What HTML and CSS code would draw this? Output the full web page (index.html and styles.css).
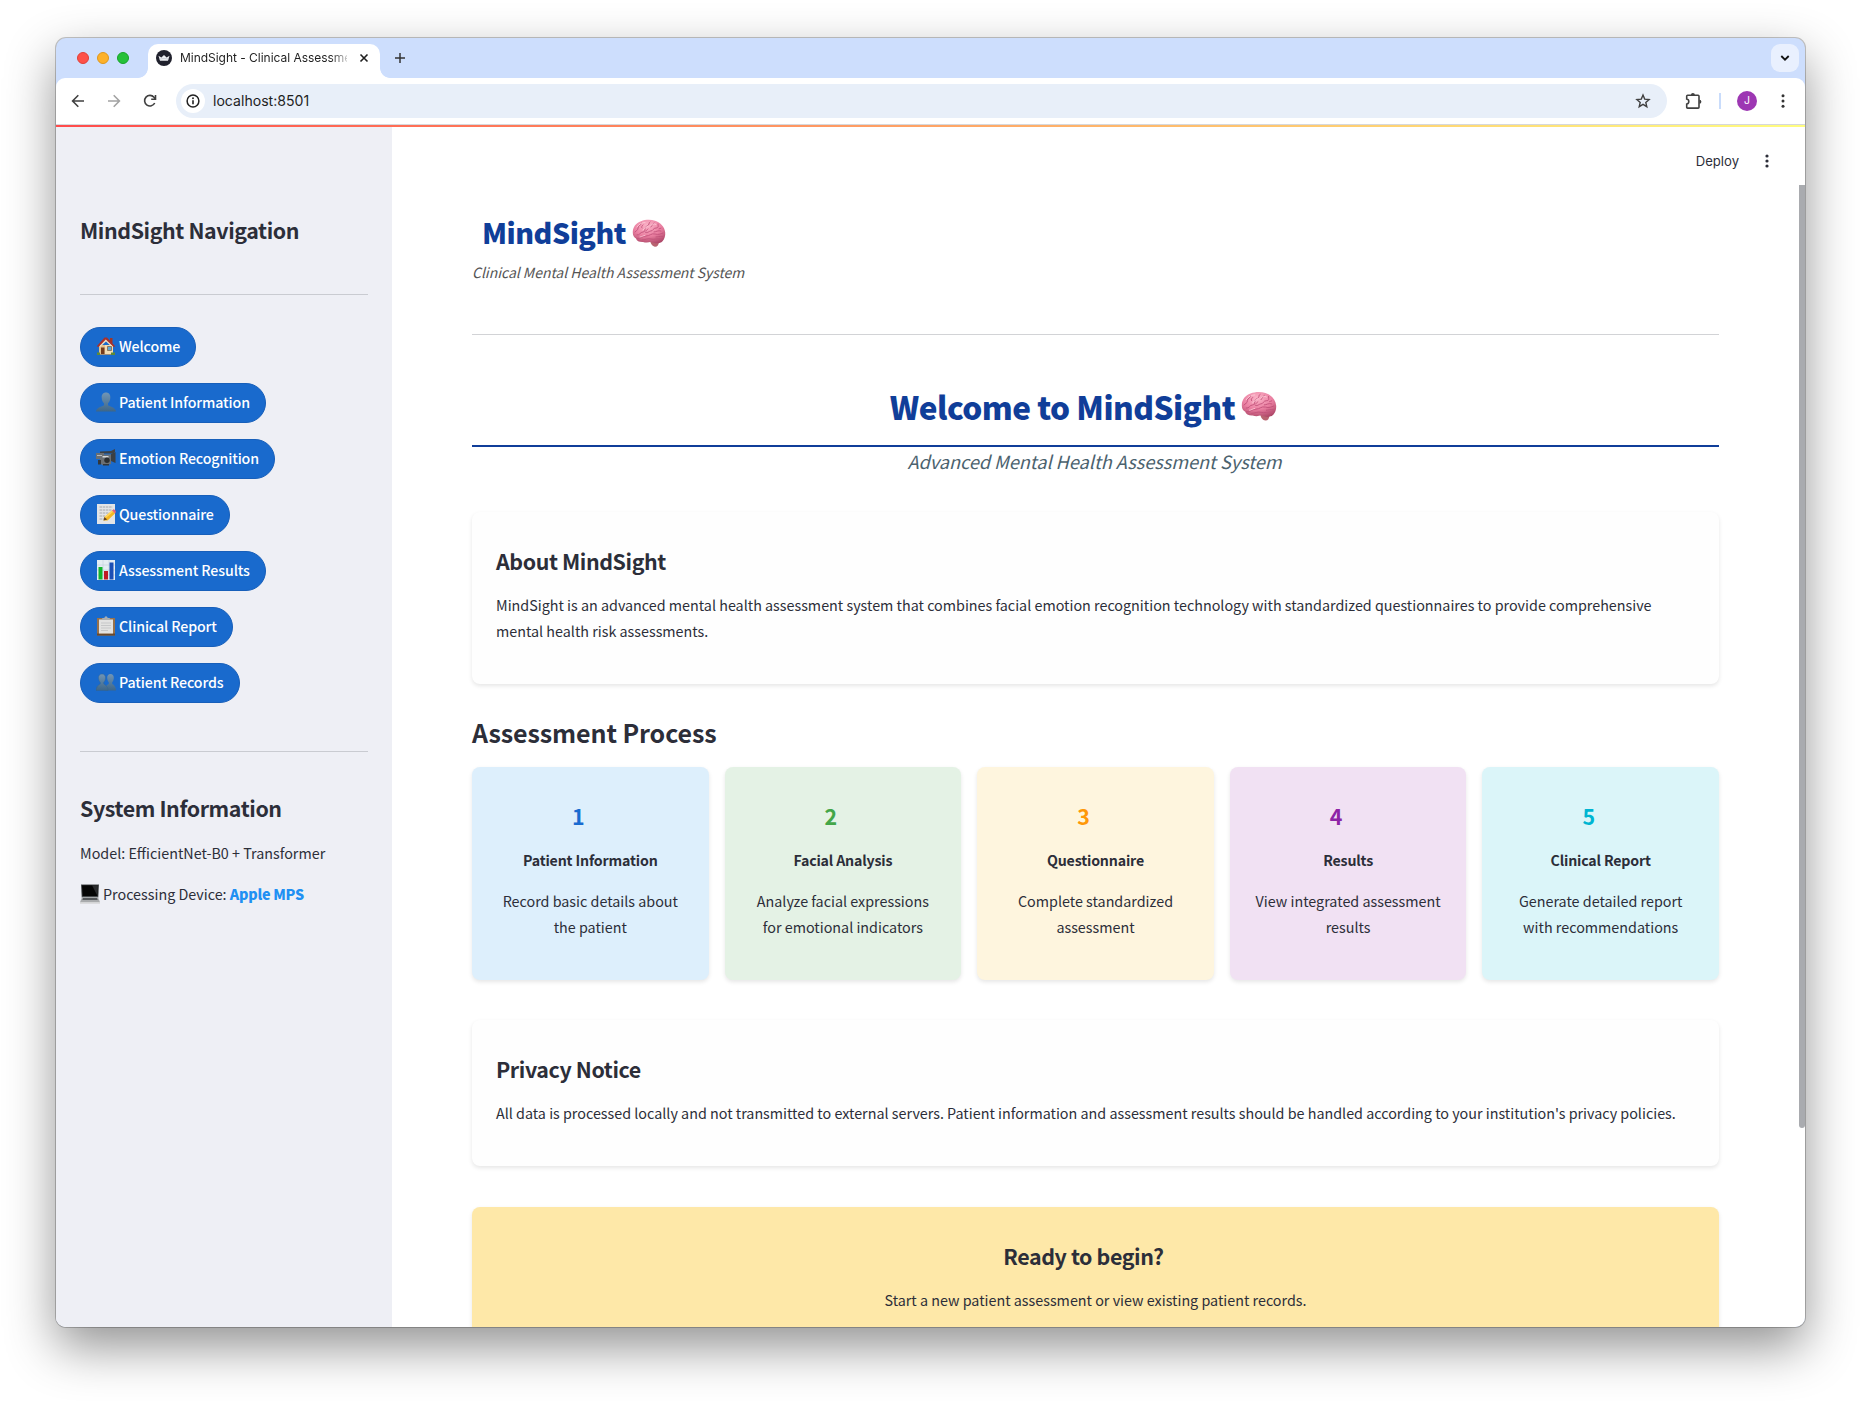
FILE: index.html
```html
<!DOCTYPE html>
<html lang="en">
<head>
<meta charset="utf-8">
<title>MindSight - Clinical Assessment</title>
<link rel="stylesheet" href="styles.css">
</head>
<body>
<svg class="defs" width="0" height="0" aria-hidden="true">
  <defs>
    <radialGradient id="pink" cx=".45" cy=".25" r=".8"><stop offset="0" stop-color="#fbb4c8"/><stop offset=".55" stop-color="#ea7fa1"/><stop offset="1" stop-color="#ad4767"/></radialGradient>
    <linearGradient id="bust" x1="0" y1="0" x2="0" y2="1"><stop offset="0" stop-color="#7195b5"/><stop offset="1" stop-color="#3d6688"/></linearGradient>
    <symbol id="brain" viewBox="0 0 34 28">
      <path d="M18 21.500c.5 3 2.500 6 5 6.200 2.500.1 3.500-1.700 4-4.700z" fill="#b86370"/>
      <path d="M.8 14C.5 8 4 4 9 2.200c4.500-1.800 10-1.900 14-.4 5.500 1.700 9.700 6.200 10.200 11.700.3 3.500-.7 6.500-2.700 8.700-1.800 2-5 2.500-8 1.800-1.300-.3-2.500-.8-3.500-1.200-2.500 1-5.500 1-8 .2-3.500.2-6.500-1-7-3.500C2 18.500.9 16.500.8 14z" fill="url(#pink)"/>
      <g fill="none" stroke="#c2527a" stroke-width=".9" stroke-linecap="round">
        <path d="M3 13c1-2 3-1 3-4s3-2 3.500-5M5 16c3 .5 3-3 6-3s1-5 4-6 1-3 3-4M10 9c-1-1 0-2 1-3M5 19.500c4 .5 5-2.500 9-2.500s5-3 9-2 5 0 8-1M13 13c2 2 4-1 6-1s2-3 5-3 2-2 2-4M19 8c1-1 1-3 3-4M22 13c2 0 4-2 7-1M10 21c3 0 6-2 9-1s6-1 11 0M24 18c2 0 3-1 7-.5M16 10c-1 1-2 1-2 2M29 9c-1 0-1 1-2 1"/>
      </g>
      <path d="M5 8c2-3 5-4.500 8-4.500M11 11c2-1 2-3 5-4M19 6.500c1-2 3-2 5-1M8 18c2 0 3-1.500 5-1.700" fill="none" stroke="#ffd6e0" stroke-width=".7" stroke-linecap="round"/>
    </symbol>
  </defs>
</svg>

<div class="window">
  <div class="tabstrip">
    <div class="lights"><i class="red"></i><i class="amber"></i><i class="green"></i></div>
    <div class="tab">
      <svg width="16" height="16" viewBox="0 0 16 16"><circle cx="8" cy="8" r="8" fill="#20212d"/><path d="M2.500 5.800l2.900 1.700L8 5l2.600 2.500 2.900-1.700-1.500 5H4z" fill="#eceef2"/><path d="M3.600 9.200c3-.9 5.800-.9 8.800 0" stroke="#b9bcc6" stroke-width=".6" fill="none"/></svg>
      <span class="tab-title">MindSight - Clinical Assessment</span>
      <svg width="10" height="10" viewBox="0 0 10 10"><path d="M1.500 1.500l7 7M8.500 1.500l-7 7" stroke="#1f1f1f" stroke-width="1.600"/></svg>
    </div>
    <svg class="new-tab" width="12" height="12" viewBox="0 0 12 12"><path d="M6 1v10M1 6h10" stroke="#333" stroke-width="1.500"/></svg>
    <div class="tab-search"><svg width="10" height="8" viewBox="0 0 10 8"><path d="M1.300 2L5 5.700 8.700 2" fill="none" stroke="#111" stroke-width="1.800"/></svg></div>
  </div>

  <div class="toolbar">
    <svg class="nav" width="14" height="14" viewBox="0 0 14 14"><path d="M13 7H2M7.300 1.300L1.600 7l5.700 5.700" fill="none" stroke="#404040" stroke-width="1.600"/></svg>
    <svg class="nav" width="14" height="14" viewBox="0 0 14 14"><path d="M1 7h11M6.700 1.300L12.400 7l-5.700 5.700" fill="none" stroke="#a3a3a3" stroke-width="1.600"/></svg>
    <svg class="nav" width="14" height="14" viewBox="0 0 14 14"><path d="M11.700 9A5.300 5.300 0 1 1 11 3.300l1.200 1.500" fill="none" stroke="#404040" stroke-width="1.600"/><path d="M12.500 1v4.300H8.200" fill="none" stroke="#404040" stroke-width="1.600"/></svg>
    <div class="address">
      <span class="info"><svg width="14" height="14" viewBox="0 0 14 14"><circle cx="7" cy="7" r="5.900" fill="none" stroke="#222" stroke-width="1.500"/><path d="M7 6.300v4" stroke="#222" stroke-width="1.600"/><circle cx="7" cy="4.200" r=".95" fill="#222"/></svg></span>
      <span class="url">localhost:8501</span>
      <svg width="16" height="16" viewBox="0 0 16 16"><path d="M8 2l1.700 4.100 4.400.4-3.300 2.900 1 4.300L8 11.400l-3.800 2.300 1-4.300L1.900 6.500l4.400-.4z" fill="none" stroke="#404040" stroke-width="1.400"/></svg>
    </div>
    <svg class="puzzle" width="17" height="17" viewBox="0 0 17 17"><path d="M1.700 6V3.200q0-.9.900-.9h10.500q.9 0 .9.900v11q0 .9-.9.900H2.600q-.9 0-.9-.9v-3.100a2.600 2.600 0 0 0 0-5.100z" fill="none" stroke="#404040" stroke-width="1.600"/><path d="M5.900 2a2 2 0 0 1 4 0zM14.400 6.800a2 2 0 0 1 0 4z" fill="#404040"/></svg>
    <i class="divider"></i>
    <span class="avatar">J</span>
    <svg class="dots" width="4" height="14" viewBox="0 0 4 14"><g fill="#333"><circle cx="2" cy="1.700" r="1.500"/><circle cx="2" cy="7" r="1.500"/><circle cx="2" cy="12.300" r="1.500"/></g></svg>
  </div>
  <div class="decoration"></div>

  <div class="app">
    <aside class="sidebar">
      <h2>MindSight Navigation</h2>
      <hr>
      <nav>
        <a><svg class="emoji" viewBox="0 0 20 20"><path d="M3 9h14v9H3z" fill="#f3dcb4"/><path d="M3 9h6v9H3z" fill="#e2c08e"/><path d="M14 2h2.500v5H14z" fill="#a33524"/><path d="M.8 10.200L8.500 1.500h2.500l8.200 8.700-1.400.8L10 4.500 2.200 11z" fill="#a8302a"/><path d="M9.800 3.600L4 9.500V11l6-5.500 6 5.500V9.500z" fill="#f5e2c0"/><path d="M5 11.500h3.500V18H5z" fill="#743a1c"/><path d="M11.500 10.500h4v4h-4z" fill="#5fa6d4" stroke="#856746" stroke-width=".8"/><path d="M1 16.500h3V19H1zM15 16.500h4V19h-4z" fill="#5f8b35"/><path d="M4 18h11v1H4z" fill="#9a8c7c"/></svg>Welcome</a>
        <a><svg class="emoji" viewBox="0 0 20 20"><path d="M10 .5c3 0 4.500 2.200 4.300 5.200-.1 2.300-.9 4.300-2.300 5.500v2c2 1.500 7.500 2 8 6.300H0c.5-4.300 6-4.800 8-6.300v-2C6.600 10 5.800 8 5.700 5.700 5.500 2.700 7 .5 10 .5z" fill="url(#bust)"/></svg>Patient Information</a>
        <a><svg class="emoji" viewBox="0 0 20 20"><path d="M4 3.500l11-.5 4-2v3l-2 1.500H4z" fill="#3c4044"/><path d="M0 5h8v6H0z" fill="#6a6f74"/><path d="M4 6.500h11v9.500l-9 1-2-3z" fill="#6b6f73"/><path d="M15 6l4.500-2v11L15 13z" fill="#3b3f43"/><path d="M6.500 8h6v1.500h-6z" fill="#d6d9db"/><circle cx="11" cy="12.300" r="2.700" fill="#2b2e31"/><path d="M1 7h5v1H1z" fill="#b6babd"/><path d="M2 12h3v4.500H2zM7 16h6v1.500H7z" fill="#34373a"/></svg>Emotion Recognition</a>
        <a><svg class="emoji" viewBox="0 0 20 20"><path d="M1 0h18v20H1z" fill="#e3e5e6"/><path d="M3.500 3h13M3.500 6h12M3.500 9h9M3.500 12h6M3.500 15h5" stroke="#a4a8ac" stroke-width="1" stroke-dasharray="2.500 .7"/><path d="M7.500 16.500l1-3.500L16 6.500l3 3-7.500 7z" fill="#f4b722"/><path d="M8.500 13l7.500-6.500 1.200 1.200-7.700 6.600z" fill="#ffd65a"/><path d="M16 6.500l1.500-1.200q2 .2 2.500 2.700l-1 1.500z" fill="#e2637a"/><path d="M7.500 16.500l1-3.500 2.700 2.500z" fill="#65451f"/></svg>Questionnaire</a>
        <a><svg class="emoji" viewBox="0 0 20 20"><path d="M1 0h18v20H1z" fill="#e4edf3"/><path d="M1 5h18M1 10h18M1 15h18M7 0v20M13 0v20" stroke="#b8c9d5" stroke-width=".5"/><path d="M2.500 7h4v12.500h-4z" fill="#12b52d"/><path d="M8 11h4v8.500H8z" fill="#c01c25"/><path d="M13.500 2.500h4v17h-4z" fill="#1b4fb4"/></svg>Assessment Results</a>
        <a><svg class="emoji" viewBox="0 0 20 20"><path d="M1 2h18v17.500H1z" fill="#97714b"/><path d="M1 17.500h18v2H1z" fill="#69492c"/><path d="M3 3.500h14v14H3z" fill="#e2e2e1"/><path d="M5 7h10M5 9.500h10M5 12h10M5 14.500h7" stroke="#c6c7c8" stroke-width="1"/><path d="M5.500 3.800q0-1.800 3-2 .1-1.600 1.500-1.600t1.500 1.600q3 .2 3 2z" fill="#a8adb3"/></svg>Clinical Report</a>
        <a><svg class="emoji" viewBox="0 0 20 20"><path d="M14.500 2c2.300 0 3.500 1.700 3.300 4-.1 1.800-.7 3.300-1.600 4.200v1.600c1.200 1.200 3.500 1.700 3.800 6.700H9c.3-5 2.600-5.500 3.800-6.700v-1.600C11.900 9.300 11.300 7.800 11.200 6c-.2-2.300 1-4 3.300-4z" fill="url(#bust)"/><path d="M6 2c2.300 0 3.700 1.700 3.500 4-.1 1.800-.7 3.300-1.800 4.200v1.600c1.400 1.200 4 2 4.300 6.700H0c.3-4.700 2.900-5.500 4.300-6.700v-1.600C3.200 9.300 2.600 7.800 2.500 6 2.300 3.700 3.700 2 6 2z" fill="url(#bust)" stroke="#31628f" stroke-width=".4"/></svg>Patient Records</a>
      </nav>
      <hr class="second">
      <h2 class="system">System Information</h2>
      <p class="model">Model: EfficientNet-B0 + Transformer</p>
      <p class="device"><svg class="emoji" viewBox="0 0 20 20"><path d="M1 .5h18l-.7 13H1.700z" fill="#45484b"/><path d="M2 1.300h16L17.500 12h-15z" fill="#050505"/><path d="M12 1.300h6L17.500 12z" fill="#2b2c2e"/><path d="M2 13.300h16l2 5H0z" fill="#a9abad"/><path d="M3 14h14l.7 2H2.300z" fill="#55585b"/><path d="M0 18h20v1.700H0z" fill="#d4d5d6"/></svg>Processing Device: <strong>Apple MPS</strong></p>
    </aside>

    <main class="main">
      <div class="menu">
        <span>Deploy</span>
        <svg width="4" height="14" viewBox="0 0 4 14"><g fill="#2c2e39"><circle cx="2" cy="2" r="1.600"/><circle cx="2" cy="7" r="1.600"/><circle cx="2" cy="12" r="1.600"/></g></svg>
      </div>
      <div class="content">
        <h1 class="brand">MindSight<svg width="34" height="28"><use href="#brain"/></svg></h1>
        <p class="tagline">Clinical Mental Health Assessment System</p>
        <hr>
        <h1 class="welcome">Welcome to MindSight<svg width="36" height="30"><use href="#brain"/></svg></h1>
        <p class="subtitle">Advanced Mental Health Assessment System</p>

        <section class="card">
          <h3>About MindSight</h3>
          <p>MindSight is an advanced mental health assessment system that combines facial emotion recognition technology with standardized questionnaires to provide comprehensive mental health risk assessments.</p>
        </section>

        <h2 class="process">Assessment Process</h2>
        <div class="steps">
          <section class="step blue"><h3>1</h3><h4>Patient Information</h4><p>Record basic details about the patient</p></section>
          <section class="step green"><h3>2</h3><h4>Facial Analysis</h4><p>Analyze facial expressions for emotional indicators</p></section>
          <section class="step yellow"><h3>3</h3><h4>Questionnaire</h4><p>Complete standardized assessment</p></section>
          <section class="step purple"><h3>4</h3><h4>Results</h4><p>View integrated assessment results</p></section>
          <section class="step cyan"><h3>5</h3><h4>Clinical Report</h4><p>Generate detailed report with recommendations</p></section>
        </div>

        <section class="card privacy">
          <h3>Privacy Notice</h3>
          <p>All data is processed locally and not transmitted to external servers. Patient information and assessment results should be handled according to your institution's privacy policies.</p>
        </section>

        <section class="card ready">
          <h3>Ready to begin?</h3>
          <p>Start a new patient assessment or view existing patient records.</p>
        </section>
      </div>
      <i class="scrollbar"></i>
    </main>
  </div>
</div>
</body>
</html>
```
FILE: styles.css
```css
* { box-sizing: border-box; }

body {
  margin: 0;
  height: 1401px;
  padding: 38px 56px 74px;
  overflow: hidden;
  background: #fff;
  color: #2c2e39;
  font: 14.33px/26px "Noto Sans CJK SC", "Noto Sans", sans-serif;
}

h1, h2, h3, h4, p { margin: 0; }
svg { display: block; flex: none; }
.defs { position: absolute; }

.window {
  width: 1749px;
  height: 1289px;
  display: flex;
  flex-direction: column;
  overflow: hidden;
  border-radius: 10px;
  background: #cddefd;
  box-shadow: 0 0 0 1px rgba(0, 0, 0, .22), 0 20px 50px rgba(0, 0, 0, .43);
}

/* Browser chrome */
.tabstrip {
  height: 40px;
  flex: none;
  display: flex;
  padding: 6px 6px 0 21px;
  font-family: Inter, sans-serif;
}
.lights { display: flex; gap: 8px; padding-top: 8px; width: 71px; }
.lights i { width: 12px; height: 12px; border-radius: 50%; border: 1px solid; }
.lights .red { background: #fe5149; border-color: #e03f38; }
.lights .amber { background: #fdb12a; border-color: #de971c; }
.lights .green { background: #25c139; border-color: #17a329; }
.tab {
  position: relative;
  width: 232px;
  height: 34px;
  display: flex;
  align-items: center;
  padding: 0 11px 6px 8px;
  border-radius: 10px 10px 0 0;
  background: #fff;
}
.tab::before, .tab::after {
  content: "";
  position: absolute;
  bottom: 0;
  width: 10px;
  height: 10px;
}
.tab::before { left: -10px; background: radial-gradient(circle at 0 0, transparent 9.5px, #fff 10.2px); }
.tab::after { right: -10px; background: radial-gradient(circle at 100% 0, transparent 9.5px, #fff 10.2px); }
.tab-title {
  width: 167px;
  margin: 0 12px 0 8px;
  overflow: hidden;
  white-space: nowrap;
  font-size: 12px;
  letter-spacing: -.03px;
  line-height: 20px;
  color: #1f1f1f;
  -webkit-mask-image: linear-gradient(90deg, #000 150px, transparent 172px);
  mask-image: linear-gradient(90deg, #000 150px, transparent 172px);
}
.new-tab { margin: 8px 0 0 14px; }
.tab-search {
  width: 28px;
  height: 28px;
  margin-left: auto;
  display: grid;
  place-items: center;
  border-radius: 9px;
  background: #e9f0fe;
}
.toolbar {
  height: 47px;
  flex: none;
  display: flex;
  align-items: center;
  padding: 0 20px 0 15px;
  border-bottom: 1px solid #d6d8dc;
  border-radius: 9px 9px 0 0;
  background: #fff;
}
.nav { margin-right: 22px; }
.nav:nth-of-type(3) { margin-right: 19px; }
.address {
  width: 1491px;
  height: 34px;
  display: flex;
  align-items: center;
  padding: 0 16px 0 5px;
  border-radius: 17px;
  background: #e8eff9;
}
.info { width: 24px; height: 24px; display: grid; place-items: center; border-radius: 50%; background: #fff; }
.url { flex: 1; margin-left: 8px; font: 14.1px/20px Inter, sans-serif; color: #1f1f1f; }
.puzzle { margin-left: 18px; }
.divider { width: 2px; height: 16px; margin: 0 16px 0 17px; background: #c9dcfb; }
.avatar {
  width: 20px;
  height: 20px;
  border-radius: 50%;
  background: #9d37b3;
  color: #fff;
  font: 10.5px/20px Inter, sans-serif;
  text-align: center;
}
.dots { margin-left: 24px; }
.decoration { height: 2px; flex: none; background: linear-gradient(90deg, #ff4b4b, #fffd80); }

/* App */
.app { flex: 1; min-height: 0; display: flex; background: #fff; }
hr { height: 1px; margin: 0; border: 0; background: #d2d3d6; }
h2, h3 { font-size: 21.4px; line-height: 28px; font-weight: 700; letter-spacing: -.4px; }
.emoji { width: 20px; height: 20px; }

.sidebar { width: 336px; flex: none; padding: 89px 24px 0; background: #eeeff5; }
.sidebar hr { margin-top: 50px; background: #c9cbd1; }
.sidebar nav { display: flex; flex-direction: column; align-items: flex-start; gap: 16px; margin-top: 32px; }
.sidebar a {
  height: 40px;
  display: flex;
  align-items: center;
  gap: 3px;
  padding: 0 15px 3px;
  border: 1px solid #175fba;
  border-radius: 20px;
  background: #196acd;
  color: #fff;
  font-size: 14.2px;
  font-weight: 500;
  letter-spacing: -.11px;
  white-space: nowrap;
}
.sidebar hr.second { margin-top: 48px; }
.system { margin-top: 42px; }
.model { margin-top: 18px; }
.device { display: flex; align-items: center; margin-top: 15px; white-space: pre; }
.device .emoji { margin: -1px 3px 0 0; }
.device strong { color: #2090f3; font-weight: 900; letter-spacing: -.25px; }

.main { position: relative; flex: 1; min-width: 0; overflow: hidden; }
.menu {
  height: 58px;
  display: flex;
  justify-content: flex-end;
  align-items: center;
  gap: 26px;
  padding: 10px 36px 0 0;
  font: 13.1px/20px Inter, sans-serif;
}
.content { padding: 28px 86px 0 80px; }
.brand { display: flex; align-items: center; gap: 6px; padding-left: 10px; font-size: 28.6px; line-height: 38px; font-weight: 900; letter-spacing: -.5px; color: #103e99; }
.brand svg { margin-top: 1px; }
.tagline { margin-top: 8px; font-size: 14px; font-style: italic; letter-spacing: -.03px; color: #555; }
.content hr { margin-top: 49px; }
.welcome {
  height: 62px;
  margin-top: 50px;
  display: flex;
  justify-content: center;
  padding-right: 24px;
  gap: 6px;
  border-bottom: 2px solid #103e99;
  font-size: 31.5px;
  line-height: 42px;
  font-weight: 900;
  letter-spacing: -.52px;
  color: #103e99;
}
.welcome svg { margin-top: 6px; }
.subtitle { padding: 0 2px 1px 0; font-size: 18.2px; line-height: 29px; font-style: italic; letter-spacing: -.04px; text-align: center; color: #4b626e; }
.card {
  margin-top: 35px;
  padding: 35px 24px 40px;
  border-radius: 8px;
  background: #fefefe;
  box-shadow: 0 2px 4px rgba(0, 0, 0, .1);
}
.card p { margin-top: 17px; }
.process { margin-top: 31px; font-size: 25px; line-height: 34px; letter-spacing: -.08px; }
.steps { display: grid; grid-template-columns: repeat(5, 1fr); gap: 16px; margin-top: 18px; }
.step { height: 213px; padding: 35px 24px 0; border-radius: 8px; text-align: center; box-shadow: 0 2px 4px rgba(0, 0, 0, .1); }
.step h3 { padding-right: 24px; letter-spacing: 0; }
.step h4 { margin-top: 17px; font-size: 14.2px; line-height: 26px; letter-spacing: -.17px; }
.step p { margin-top: 15px; }
.step.blue { background: #ddeffc; }
.blue h3 { color: #196bd0; }
.step.green { background: #e4f2e5; }
.green h3 { color: #43a648; }
.step.yellow { background: #fef5de; }
.yellow h3 { color: #ff9807; }
.step.purple { background: #f1e1f3; }
.purple h3 { color: #8e24a6; }
.step.cyan { background: #dbf5f9; }
.cyan h3 { color: #00b5d2; }
.privacy { margin-top: 40px; }
.ready { height: 180px; margin-top: 41px; background: #fee8a8; text-align: center; }
.ready h3 { padding-right: 24px; }

.scrollbar {
  position: absolute;
  top: 58px;
  right: 0;
  width: 6px;
  height: 943px;
  border-radius: 0 0 3px 3px;
  background: #a9abaf;
}
```
